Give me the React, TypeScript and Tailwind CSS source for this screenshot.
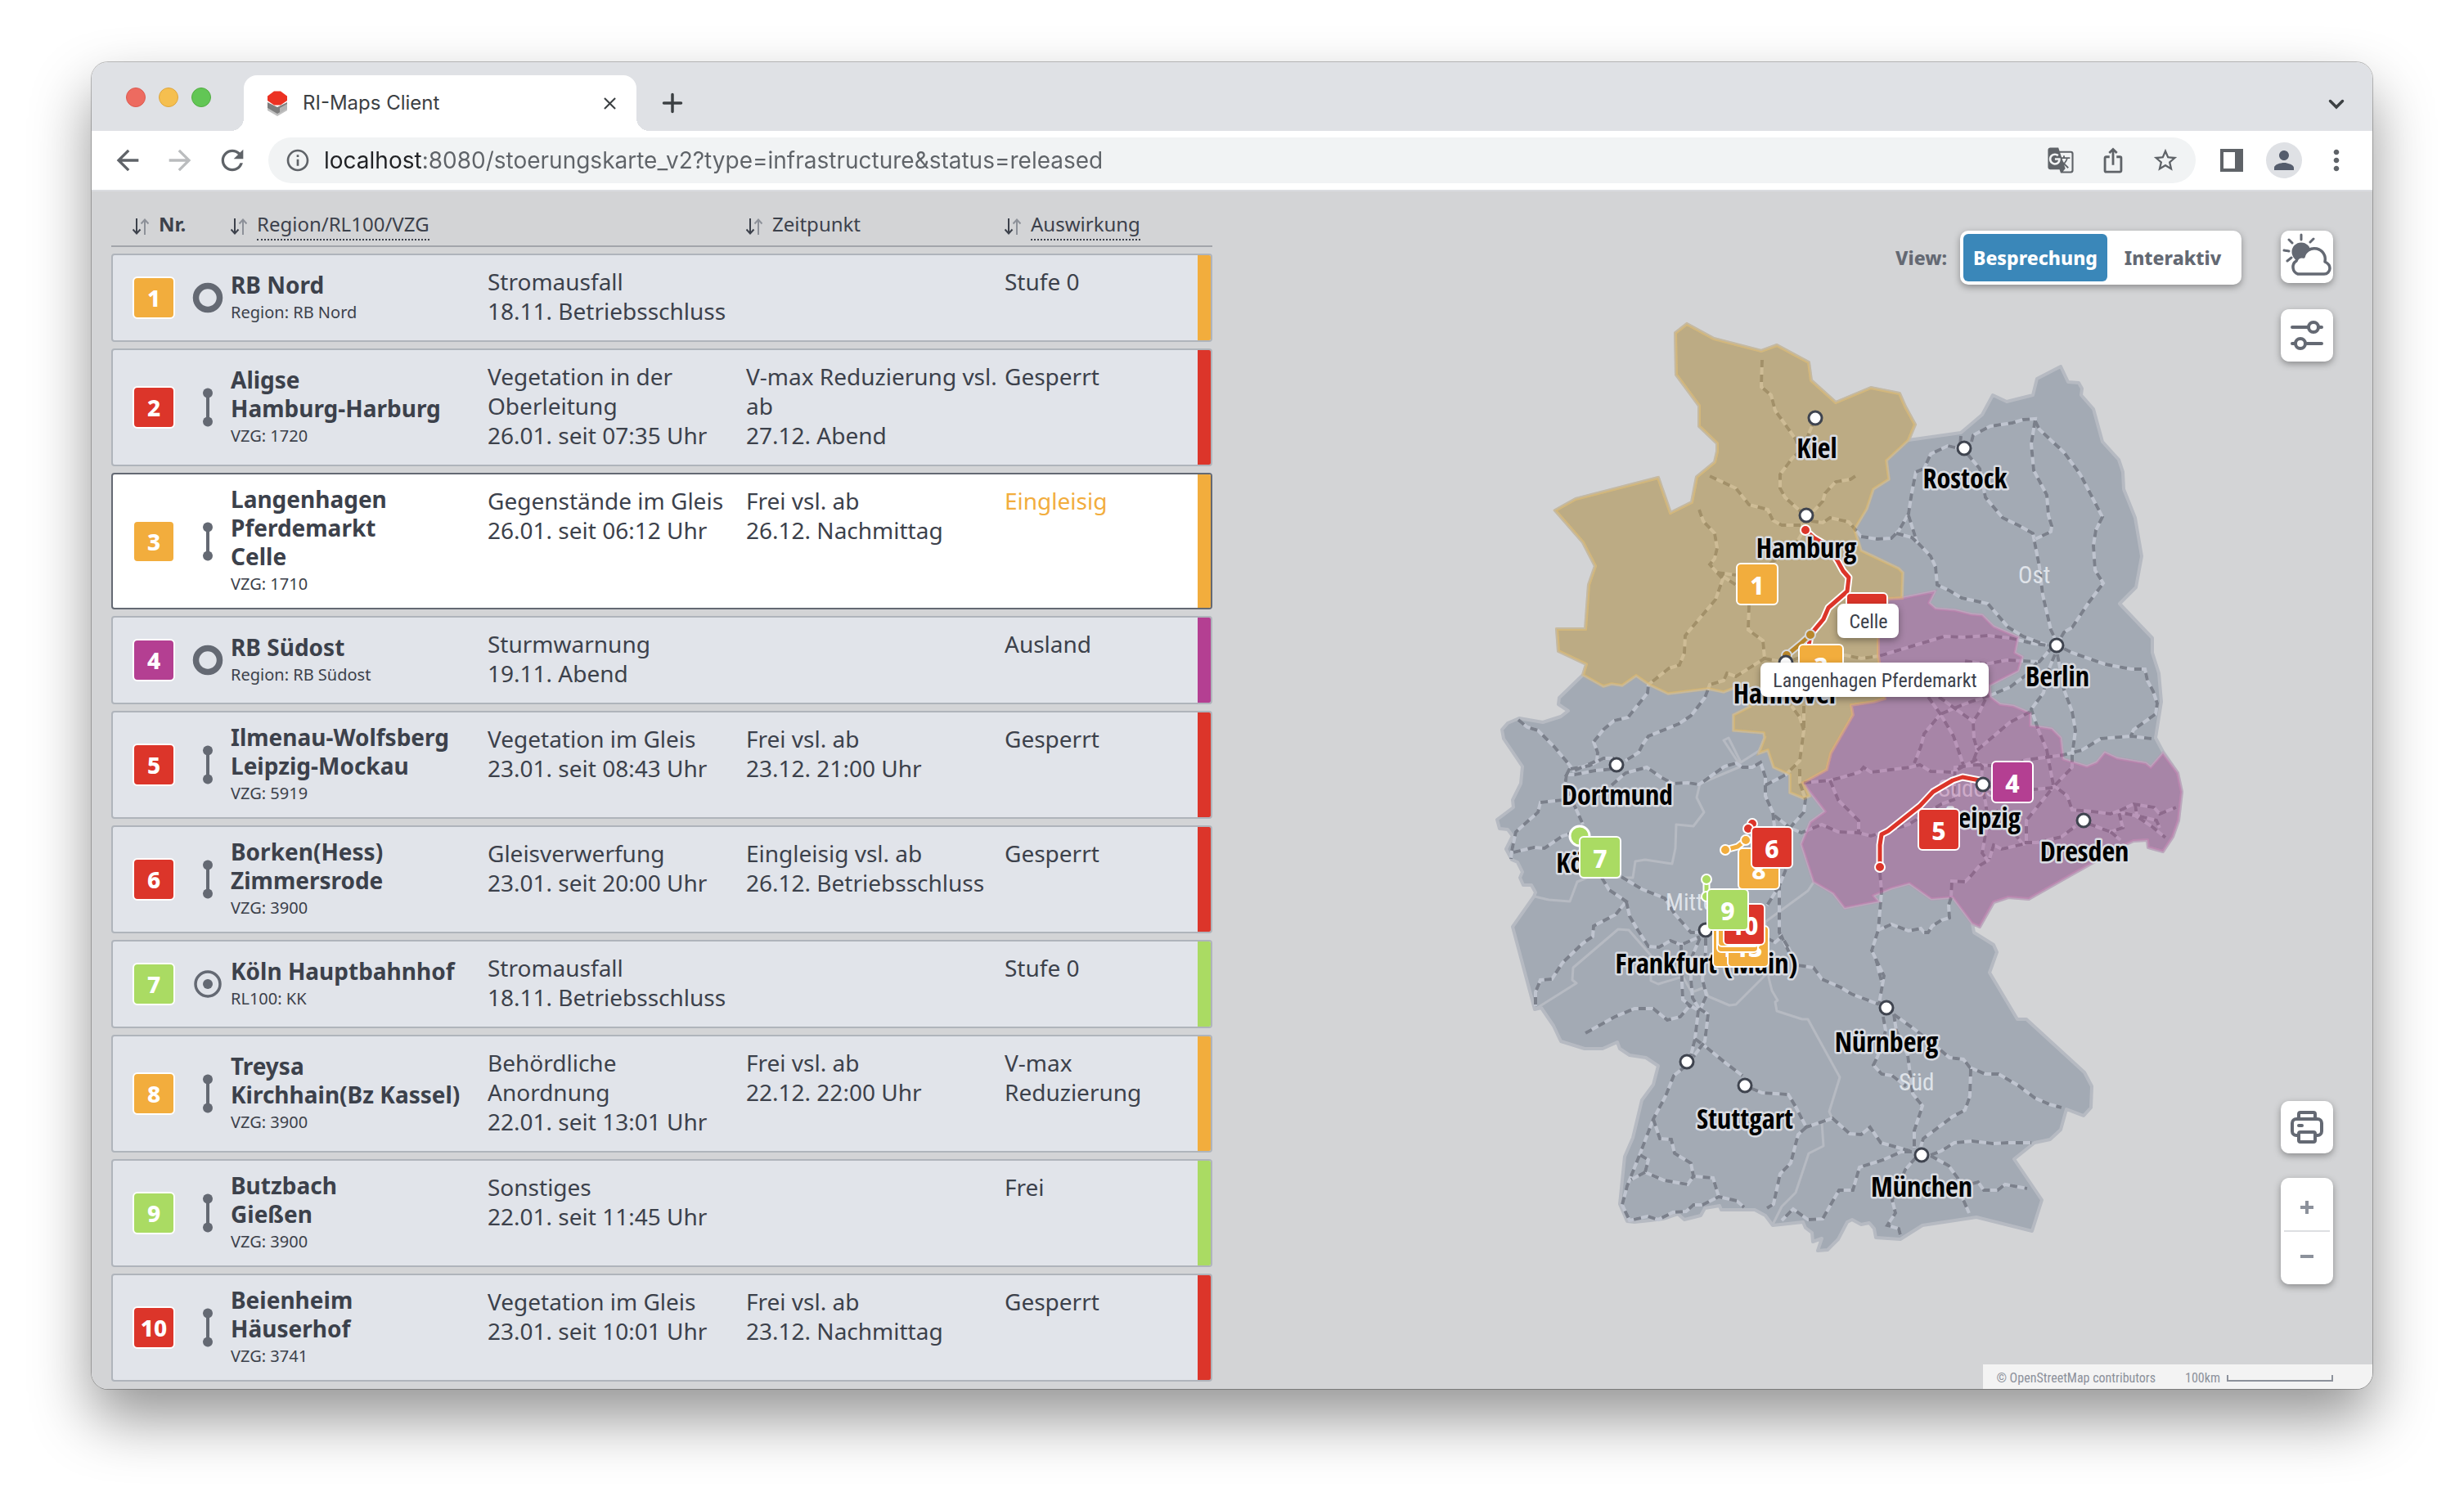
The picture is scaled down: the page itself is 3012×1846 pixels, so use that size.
import React from "react";
import {
  MdArrowBack,
  MdArrowForward,
  MdClose,
  MdGTranslate,
  MdInfoOutline,
  MdIosShare,
  MdMoreVert,
  MdPerson,
  MdRefresh,
  MdStarBorder,
} from "react-icons/md";

type Tone = "orange" | "red" | "purple" | "green";

const TONE_BG: Record<Tone, string> = {
  orange: "bg-[#f2ad3d]",
  red: "bg-[#dc352a]",
  purple: "bg-[#b43f92]",
  green: "bg-[#aadb63]",
};

const TONE_FILL: Record<Tone, string> = {
  orange: "#f2ad3d",
  red: "#dc352a",
  purple: "#b43f92",
  green: "#aadb63",
};

type Kind = "region" | "station" | "track";

interface Incident {
  nr: number;
  tone: Tone;
  kind: Kind;
  names: string[];
  detail: string;
  reason: string[];
  time: string[];
  effect: string[];
  active?: boolean;
}

const INCIDENTS: Incident[] = [
  { nr: 1, tone: "orange", kind: "region", names: ["RB Nord"], detail: "Region: RB Nord", reason: ["Stromausfall", "18.11. Betriebsschluss"], time: [], effect: ["Stufe 0"] },
  { nr: 2, tone: "red", kind: "track", names: ["Aligse", "Hamburg-Harburg"], detail: "VZG: 1720", reason: ["Vegetation in der", "Oberleitung", "26.01. seit 07:35 Uhr"], time: ["V-max Reduzierung vsl.", "ab", "27.12. Abend"], effect: ["Gesperrt"] },
  { nr: 3, tone: "orange", kind: "track", names: ["Langenhagen", "Pferdemarkt", "Celle"], detail: "VZG: 1710", reason: ["Gegenstände im Gleis", "26.01. seit 06:12 Uhr"], time: ["Frei vsl. ab", "26.12. Nachmittag"], effect: ["Eingleisig"], active: true },
  { nr: 4, tone: "purple", kind: "region", names: ["RB Südost"], detail: "Region: RB Südost", reason: ["Sturmwarnung", "19.11. Abend"], time: [], effect: ["Ausland"] },
  { nr: 5, tone: "red", kind: "track", names: ["Ilmenau-Wolfsberg", "Leipzig-Mockau"], detail: "VZG: 5919", reason: ["Vegetation im Gleis", "23.01. seit 08:43 Uhr"], time: ["Frei vsl. ab", "23.12. 21:00 Uhr"], effect: ["Gesperrt"] },
  { nr: 6, tone: "red", kind: "track", names: ["Borken(Hess)", "Zimmersrode"], detail: "VZG: 3900", reason: ["Gleisverwerfung", "23.01. seit 20:00 Uhr"], time: ["Eingleisig vsl. ab", "26.12. Betriebsschluss"], effect: ["Gesperrt"] },
  { nr: 7, tone: "green", kind: "station", names: ["Köln Hauptbahnhof"], detail: "RL100: KK", reason: ["Stromausfall", "18.11. Betriebsschluss"], time: [], effect: ["Stufe 0"] },
  { nr: 8, tone: "orange", kind: "track", names: ["Treysa", "Kirchhain(Bz Kassel)"], detail: "VZG: 3900", reason: ["Behördliche", "Anordnung", "22.01. seit 13:01 Uhr"], time: ["Frei vsl. ab", "22.12. 22:00 Uhr"], effect: ["V-max", "Reduzierung"] },
  { nr: 9, tone: "green", kind: "track", names: ["Butzbach", "Gießen"], detail: "VZG: 3900", reason: ["Sonstiges", "22.01. seit 11:45 Uhr"], time: [], effect: ["Frei"] },
  { nr: 10, tone: "red", kind: "track", names: ["Beienheim", "Häuserhof"], detail: "VZG: 3741", reason: ["Vegetation im Gleis", "23.01. seit 10:01 Uhr"], time: ["Frei vsl. ab", "23.12. Nachmittag"], effect: ["Gesperrt"] },
];

const COLUMNS = "grid grid-cols-[144px_314fr_316fr_316fr_236fr_16px]";

/* ---------- browser chrome ---------- */

function Favicon() {
  return (
    <svg viewBox="0 0 26 32" className="h-8 w-[26px]" aria-hidden="true">
      <path d="M1 22l12 6 12-6v3l-12 7-12-7z" fill="#c0c0c0" />
      <path d="M1 15l12 6 12-6v7l-12 7-12-7z" fill="#7d7d7d" />
      <path d="M16 22l9-5v6l-9 5z" fill="#b4b4b4" />
      <path d="M9 1.500h8l8 6V13l-8 5.500H9L1 13V7.500z" fill="#ec3223" />
    </svg>
  );
}

function TabStrip() {
  return (
    <div className="flex h-[84px] items-end bg-[#dfe1e5] pl-[42px] pr-6">
      <div className="mb-[29px] flex gap-4">
        <button aria-label="Schließen" className="size-6 rounded-full border border-[#dc5a50] bg-[#ed6b60]" />
        <button aria-label="Minimieren" className="size-6 rounded-full border border-[#dfa63c] bg-[#f5bf4f]" />
        <button aria-label="Maximieren" className="size-6 rounded-full border border-[#53ac43] bg-[#62c655]" />
      </div>
      <div className="relative ml-10 flex h-[68px] w-[480px] items-center rounded-t-2xl bg-white pl-7 pr-5">
        <div className="absolute -left-4 bottom-0 size-4 bg-[radial-gradient(circle_at_0_0,transparent_16px,white_16px)]" />
        <div className="absolute -right-4 bottom-0 size-4 bg-[radial-gradient(circle_at_100%_0,transparent_16px,white_16px)]" />
        <Favicon />
        <span className="ml-[18px] flex-1 text-[24px] text-[#3c4043]">RI-Maps Client</span>
        <button aria-label="Tab schließen" className="text-[#3c4043]">
          <MdClose size={25} stroke="currentColor" />
        </button>
      </div>
      <button aria-label="Neuer Tab" className="mb-5 ml-[30px] text-[#3c4043]">
        <svg viewBox="0 0 28 28" className="size-7" stroke="currentColor" strokeWidth="3.5" strokeLinecap="round">
          <path d="M14 3.500v21M3.500 14h21" />
        </svg>
      </button>
      <button aria-label="Tabs durchsuchen" className="mb-[19px] ml-auto flex w-10 justify-center text-[#3c4043]">
        <svg viewBox="0 0 28 28" className="size-7" fill="none" stroke="currentColor" strokeWidth="3.5" strokeLinecap="round">
          <path d="M6.500 10.500l7.500 7.500 7.500-7.500" />
        </svg>
      </button>
    </div>
  );
}

function Toolbar() {
  return (
    <div className="flex h-[74px] items-center gap-6 border-b-2 border-[#dadce0] bg-white px-6 text-[#5f6368]">
      <button aria-label="Zurück"><MdArrowBack size={40} /></button>
      <button aria-label="Vorwärts" className="text-[#babcbe]"><MdArrowForward size={40} /></button>
      <button aria-label="Neu laden"><MdRefresh size={40} /></button>
      <div className="flex h-14 flex-1 items-center rounded-full bg-[#f1f3f4] px-5">
        <button aria-label="Websiteinformationen"><MdInfoOutline size={32} /></button>
        <input
          aria-label="Adresse"
          defaultValue="localhost:8080/stoerungskarte_v2?type=infrastructure&status=released"
          className="ml-4 h-10 min-w-0 flex-1 bg-linear-to-r from-[#202124] from-[121px] to-[#5f6368] to-[121px] bg-clip-text text-[28px] text-transparent outline-none"
        />
        <div className="flex gap-[30px]">
          <button aria-label="Übersetzen"><MdGTranslate size={34} /></button>
          <button aria-label="Teilen"><MdIosShare size={34} /></button>
          <button aria-label="Lesezeichen"><MdStarBorder size={34} /></button>
        </div>
      </div>
      <div className="flex items-center gap-[22px]">
        <button aria-label="Seitenleiste" className="flex size-10 items-center justify-center">
          <svg viewBox="0 0 28 28" className="size-7">
            <path fillRule="evenodd" d="M0 0h28v28H0zM4 4v20h14V4z" fill="currentColor" />
          </svg>
        </button>
        <button aria-label="Profil" className="flex size-11 items-center justify-center rounded-full bg-[#dfe1e5] text-[#555d6d]">
          <MdPerson size={36} />
        </button>
        <button aria-label="Menü"><MdMoreVert size={40} /></button>
      </div>
    </div>
  );
}

/* ---------- incident table ---------- */

function SortIcon() {
  return (
    <svg viewBox="0 0 20 20" className="size-5" fill="none" strokeWidth="2">
      <path d="M5 0v19M0.500 13.500l4.500 5 4.500-5" stroke="#3c414b" />
      <path d="M15 20V1M10.500 6.500l4.500-5 4.500 5" stroke="#8d9199" />
    </svg>
  );
}

function HeaderCell({ label, dotted, bold, className }: { label: string; dotted?: boolean; bold?: boolean; className?: string }) {
  return (
    <th scope="col" className={`text-left ${className ?? ""}`}>
      <button className="flex items-center gap-3">
        <SortIcon />
        <span
          className={`border-b-2 pb-1 text-[24px] leading-7 text-[#3c414b] ${dotted ? "border-dotted border-[#3c414b]" : "border-transparent"} ${bold ? "font-bold" : "font-normal"}`}
        >
          {label}
        </span>
      </button>
    </th>
  );
}

function KindIcon({ kind }: { kind: Kind }) {
  return (
    <svg viewBox="0 0 40 48" className="h-12 w-10" fill="none" stroke="#646973" aria-hidden="true">
      {kind === "region" && <circle cx="20" cy="24" r="14.500" strokeWidth="7.500" />}
      {kind === "station" && (
        <>
          <circle cx="20" cy="24" r="15" strokeWidth="3.500" />
          <circle cx="20" cy="24" r="6" fill="#646973" stroke="none" />
        </>
      )}
      {kind === "track" && (
        <>
          <path d="M20 7v34" strokeWidth="4" />
          <circle cx="20" cy="6.500" r="6" fill="#646973" stroke="none" />
          <circle cx="20" cy="41.500" r="6" fill="#646973" stroke="none" />
        </>
      )}
    </svg>
  );
}

function Lines({ lines }: { lines: string[] }) {
  return (
    <>
      {lines.map((line) => (
        <div key={line}>{line}</div>
      ))}
    </>
  );
}

function IncidentRow({ item }: { item: Incident }) {
  return (
    <tr
      className={`${COLUMNS} shrink-0 overflow-hidden whitespace-nowrap rounded border-2 text-[28px] leading-9 text-[#3c414b] ${item.active ? "border-[#646973] bg-white" : "border-[#afb4bb] bg-[#e1e4ea]"}`}
    >
      <td className="flex items-center gap-5 pl-6">
        <span className={`flex size-13 items-center justify-center rounded-md border-2 border-white text-[28px] font-extrabold text-white ${TONE_BG[item.tone]}`}>
          {item.nr}
        </span>
        <KindIcon kind={item.kind} />
      </td>
      <th scope="row" className="self-center pb-4 pt-[13px] text-left font-bold leading-[35px]">
        <Lines lines={item.names} />
        <div className="mt-[3px] text-[20px] font-normal leading-[26px]">{item.detail}</div>
      </th>
      <td className="pb-[18px] pt-[14px]"><Lines lines={item.reason} /></td>
      <td className="pb-[18px] pt-[14px]"><Lines lines={item.time} /></td>
      <td className={`pb-[18px] pt-[14px] ${item.active ? "text-[#f2ad3d]" : ""}`}><Lines lines={item.effect} /></td>
      <td className={TONE_BG[item.tone]} />
    </tr>
  );
}

function IncidentTable() {
  return (
    <section className="overflow-hidden px-6 font-['Noto_Sans',sans-serif]">
      <table className="flex flex-col gap-2">
        <thead className="block">
          <tr className={`${COLUMNS} h-[68px] items-end border-b-2 border-[#a2a5ab] px-[2px] pb-[6px]`}>
            <HeaderCell label="Nr." bold className="pl-6" />
            <HeaderCell label="Region/RL100/VZG" dotted className="col-span-2" />
            <HeaderCell label="Zeitpunkt" />
            <HeaderCell label="Auswirkung" dotted />
          </tr>
        </thead>
        <tbody className="flex flex-col gap-2">
          {INCIDENTS.map((item) => (
            <IncidentRow key={item.nr} item={item} />
          ))}
        </tbody>
      </table>
    </section>
  );
}

/* ---------- map ---------- */

const GERMANY =
  "2062,396 2095,414 2153,429 2172,422 2211,443 2214,465 2244,492 2287,474 2322,481 2329,497 2341,519 2333,538 2397,529 2423,507 2436,483 2453,491 2485,483 2490,463 2519,448 2528,467 2541,468 2545,475 2544,483 2559,500 2570,540 2590,562 2595,577 2596,598 2610,633 2618,680 2611,718 2591,738 2631,780 2631,798 2639,823 2642,858 2635,902 2644,919 2662,945 2667,968 2663,1003 2656,1023 2644,1041 2626,1036 2625,1027 2608,1028 2597,1033 2554,1057 2480,1099 2455,1097 2437,1103 2420,1133 2411,1129 2413,1140 2437,1155 2441,1164 2432,1189 2466,1246 2477,1246 2548,1311 2557,1328 2556,1354 2547,1364 2526,1356 2519,1381 2506,1393 2487,1397 2462,1417 2496,1467 2484,1505 2416,1488 2350,1498 2323,1515 2293,1513 2291,1502 2285,1495 2275,1497 2264,1491 2258,1494 2247,1515 2234,1528 2222,1529 2227,1514 2216,1518 2215,1507 2207,1501 2204,1494 2167,1498 2158,1486 2145,1479 2104,1479 2102,1474 2084,1477 2079,1486 2059,1491 2051,1484 2033,1490 2017,1492 1998,1494 1989,1493 1980,1472 1986,1414 1996,1391 2007,1345 2021,1326 2027,1303 2012,1293 1992,1290 1980,1282 1977,1274 1959,1282 1937,1282 1908,1273 1899,1254 1884,1232 1876,1234 1849,1133 1875,1096 1877,1091 1872,1082 1862,1082 1858,1073 1861,1066 1855,1054 1848,1051 1841,1038 1849,1022 1843,1014 1833,1013 1830,1002 1850,987 1849,978 1859,958 1861,937 1838,903 1836,892 1843,884 1857,878 1886,883 1908,876 1917,869 1905,861 1906,853 1935,825 1939,812 1905,796 1903,769 1938,769 1942,715 1950,692 1935,663 1901,624 1926,610 2027,584 2042,627 2068,614 2074,583 2096,565 2099,552 2099,542 2077,521 2077,496 2049,458 2048,407";

const NORD =
  "2062,396 2095,414 2153,429 2172,422 2211,443 2214,465 2244,492 2287,474 2322,481 2329,497 2341,519 2333,538 2306,563 2309,586 2290,598 2282,622 2267,647 2275,673 2321,695 2326,700 2325,731 2308,732 2296,780 2296,802 2304,854 2290,858 2263,862 2265,874 2238,921 2233,941 2204,957 2212,973 2205,976 2188,969 2188,947 2168,938 2161,917 2150,921 2157,902 2156,896 2119,893 2119,874 2139,864 2120,841 2107,846 2088,842 2039,848 2016,837 2000,826 1983,838 1970,836 1960,839 1935,825 1939,812 1905,796 1903,769 1938,769 1942,715 1950,692 1935,663 1901,624 1926,610 2027,584 2042,627 2068,614 2074,583 2096,565 2099,552 2099,542 2077,521 2077,496 2049,458 2048,407";

const SUEDOST =
  "2325,731 2365,723 2358,737 2366,744 2390,746 2410,751 2423,752 2437,766 2467,779 2463,798 2472,803 2467,820 2432,838 2433,852 2445,861 2461,863 2482,872 2482,887 2508,891 2519,902 2522,928 2551,937 2563,932 2573,920 2588,927 2623,933 2629,938 2644,921 2662,945 2667,968 2663,1003 2656,1023 2644,1041 2626,1036 2625,1027 2608,1028 2597,1033 2554,1057 2480,1099 2455,1097 2437,1103 2420,1133 2411,1129 2387,1097 2361,1099 2334,1080 2312,1086 2290,1095 2296,1102 2255,1110 2241,1092 2217,1078 2202,1032 2213,1005 2231,992 2204,957 2233,941 2238,921 2265,874 2263,862 2290,858 2304,854 2296,802 2296,780 2308,732";

const INNER_BORDERS = [
  "2158,900 2150,918 2128,932 2113,902 2107,905 2128,937 2078,958 2074,975 2083,993 2070,1010 2049,1008 2048,1037 2044,1056 2011,1051 1999,1053 1996,1073 1940,1073 1928,1078 1919,1102 1893,1100 1876,1096",
  "2204,957 2231,992 2213,1005 2202,1032",
  "2218,1077 2210,1089 2158,1127 2162,1195 2166,1211 2173,1223 2170,1225 2172,1236 2203,1246 2210,1246 2222,1268 2249,1317 2236,1359 2240,1368 2227,1372 2229,1401 2211,1410 2195,1458 2178,1475 2167,1497",
  "2158,1192 2122,1228 2114,1229 2088,1218 2084,1207 2068,1213 2057,1194 2027,1203 2018,1199 2018,1168 1991,1137 1978,1136 1923,1183 1922,1198 1927,1202 1876,1234",
];

const RAILS = [
  "2154,440 2153,473 2165,483 2170,502 2178,513 2195,537 2200,552 2191,560 2176,580 2176,597 2182,608 2203,627",
  "2218,513 2210,533 2200,552",
  "2268,582 2262,586 2244,589 2231,603 2228,613 2214,628",
  "2090,582 2122,597 2138,617 2161,623 2167,636 2178,642 2203,642",
  "2077,623 2082,637 2096,652 2099,670 2096,683 2090,690 2099,700 2122,703",
  "2207,645 2195,665 2163,690 2138,712",
  "2099,700 2122,715",
  "2099,700 2106,708 2097,733 2060,777 2059,798 2053,813 2040,817 2015,837 2014,847 1990,877 1973,881 1960,892 1948,907 1953,920 1952,930 1922,943",
  "2138,740 2137,770 2155,783 2157,805 2122,827 2111,823 2107,832 2090,837 2084,853 2067,875 2052,885 2015,900 2008,910 2003,920 1987,930",
  "2157,805 2183,810 2210,800 2256,801 2275,805 2297,802 2337,790 2377,778 2400,779 2430,777 2457,780 2487,787 2503,789",
  "2214,637 2228,639 2237,633 2260,638 2275,656 2295,659 2312,658 2321,649 2333,628 2337,602 2342,577 2352,573 2360,555 2381,545 2394,548",
  "2333,630 2343,662 2360,680 2366,693 2368,715 2383,722 2398,731 2430,738 2455,767 2473,778 2503,789",
  "2318,652 2337,657 2342,662",
  "2397,533 2396,545",
  "2410,540 2412,532 2433,521 2460,517 2473,513 2488,512 2483,543 2486,575 2502,605 2504,630 2508,643 2507,650 2488,659",
  "2488,515 2493,525 2523,553 2543,580 2570,632 2562,648 2559,667 2561,697 2571,713 2553,737 2533,767 2523,773 2516,785",
  "2405,555 2420,573 2427,608 2448,633 2467,642 2485,652 2493,693 2497,727 2507,770 2513,783",
  "2402,808 2427,812 2453,807 2473,808 2493,809 2507,793",
  "2490,810 2477,825 2457,840 2433,850 2403,860 2372,873 2352,897 2348,913 2340,933",
  "2357,852 2372,873 2388,900 2400,935",
  "2370,852 2412,882 2413,903 2417,917 2413,928 2423,937 2422,960 2427,980 2430,1003 2423,1043 2430,1052 2420,1058 2410,1070 2402,1078 2386,1077 2385,1097 2382,1107 2383,1122 2373,1125 2362,1132 2357,1140 2352,1140 2348,1135 2333,1138 2312,1130 2296,1137",
  "2427,855 2420,870 2412,882",
  "2482,870 2457,883 2417,917",
  "2512,800 2505,817 2498,847 2483,867 2492,893 2502,917 2510,960 2527,973 2533,990 2557,992 2580,995 2593,990 2608,983 2633,987 2640,995 2660,987",
  "2515,800 2523,843 2533,870 2537,893 2533,923 2533,938 2510,962 2477,1003 2477,1030 2490,1030 2520,1023 2537,1010",
  "2523,793 2533,798 2573,812 2605,818 2622,818 2625,832 2632,845 2637,860 2635,873 2608,892 2605,900",
  "2630,903 2605,900 2568,903 2545,917 2522,923 2477,929 2453,937 2417,935 2390,938 2388,977",
  "2205,957 2237,954 2253,950 2273,944 2278,938 2287,944 2335,938 2347,935 2360,943 2387,944 2400,937 2417,928",
  "2430,960 2467,957 2487,965 2510,963",
  "2440,990 2463,1020 2473,1032 2447,1038 2437,1033 2432,1050",
  "2237,954 2247,978 2272,1003 2272,1018",
  "2169,997 2188,1012 2202,1018 2227,1008 2247,1017 2272,1018 2287,1022 2333,1008 2373,983 2390,977",
  "2553,1007 2580,1017 2595,1012 2590,993 2610,997 2630,1010 2647,1024",
  "2610,983 2612,997 2636,1003 2640,1012",
  "2580,1017 2592,1027",
  "2298,1067 2300,1090 2296,1137 2288,1162 2303,1193 2297,1227",
  "2293,1172 2300,1200",
  "2183,1063 2175,1083 2175,1140 2187,1160 2197,1180 2217,1183 2227,1197 2250,1207 2263,1215 2297,1228",
  "2175,1083 2160,1107",
  "2160,1147 2170,1152 2178,1145 2192,1175",
  "2302,1243 2305,1260 2295,1292 2290,1302 2300,1313 2313,1315 2330,1328",
  "2315,1240 2318,1260 2332,1290 2338,1337 2350,1352 2340,1382 2340,1403",
  "2315,1240 2340,1258 2370,1282 2383,1293 2400,1295 2408,1305 2427,1313 2443,1313 2467,1327 2487,1342 2505,1350 2520,1354",
  "2409,1307 2408,1340 2402,1357 2387,1365 2351,1392 2348,1402",
  "2335,1407 2317,1402 2299,1397 2286,1378 2275,1387 2261,1386 2240,1367 2208,1378 2195,1353 2186,1338 2154,1336 2132,1327",
  "2208,1378 2198,1387 2189,1422 2176,1435 2168,1472 2160,1477",
  "2337,1408 2324,1408 2302,1418 2273,1427 2265,1455 2248,1455 2228,1490 2210,1491 2192,1478 2178,1492",
  "2342,1415 2329,1430 2313,1467 2317,1483 2307,1498 2321,1502 2323,1510",
  "2360,1413 2382,1425 2393,1440 2400,1467 2407,1483",
  "2411,1447 2418,1445 2425,1455 2442,1455 2451,1448 2478,1453",
  "2360,1412 2373,1407 2389,1397 2411,1395 2436,1398 2454,1397 2483,1397",
  "2061,1303 2046,1315 2036,1340 2021,1368 2005,1410 1989,1450 1983,1473 1992,1492 2014,1487 2027,1491 2045,1482 2061,1481 2070,1473 2081,1473 2101,1463 2123,1468 2132,1476",
  "2021,1368 2029,1392 2043,1393 2047,1410 2067,1422 2070,1438 2094,1440 2101,1463",
  "2005,1412 2015,1418 2011,1433 2034,1443 2063,1448 2070,1438",
  "2011,1433 1994,1442",
  "1938,1263 1974,1243 1998,1233 2021,1233 2038,1247 2054,1243 2065,1230",
  "2055,1155 2056,1200 2057,1222 2067,1230 2076,1235 2072,1270 2067,1290",
  "2078,1147 2068,1170 2067,1197 2069,1220 2077,1233 2088,1240",
  "2085,1147 2085,1163 2081,1197 2086,1217 2078,1235",
  "2088,1240 2084,1273 2070,1292",
  "2072,1270 2083,1278 2110,1300 2130,1315",
  "1958,1073 1967,1088 1988,1102 1975,1118 1948,1132 1947,1145 1935,1153 1910,1177 1897,1197 1883,1198 1877,1213 1877,1230",
  "1988,1102 1992,1120 2002,1137 2015,1157 2028,1158 2042,1150 2055,1155 2078,1145",
  "1982,1072 2007,1087 2035,1098 2047,1117 2067,1140 2078,1140",
  "1856,880 1867,889 1880,893 1900,913 1920,937 1915,947 1925,947 1950,942 1973,940",
  "1920,940 1943,936 1960,927 1973,927",
  "1915,947 1913,960 1927,990 1935,1008",
  "1910,978 1883,981 1880,993 1853,1017 1848,1040 1847,1050",
  "1850,1042 1875,1036 1888,1037 1910,1022 1927,1017",
  "1970,960 1987,945 2013,938 2030,950 2045,958 2063,957 2077,959 2108,937 2122,933 2130,938 2142,938 2152,932 2158,950 2158,973 2167,993 2169,1010",
  "2158,960 2183,947 2200,930 2205,893 2200,877 2190,863",
  "2205,863 2205,893",
  "2200,940 2200,957 2207,977 2205,993 2188,1012",
];

const CITIES = [
  { name: "Kiel", x: 2219, y: 511, lx: 2221, ly: 560 },
  { name: "Rostock", x: 2401, y: 548, lx: 2402, ly: 597 },
  { name: "Hamburg", x: 2208, y: 630, lx: 2208, ly: 682 },
  { name: "Berlin", x: 2514, y: 789, lx: 2515, ly: 839 },
  { name: "Hannover", x: 2183, y: 810, lx: 2183, ly: 860 },
  { name: "Dortmund", x: 1976, y: 935, lx: 1977, ly: 984 },
  { name: "Köln", x: 1931, y: 1022, lx: 1932, ly: 1067 },
  { name: "Leipzig", x: 2424, y: 959, lx: 2425, ly: 1012 },
  { name: "Dresden", x: 2547, y: 1003, lx: 2548, ly: 1053 },
  { name: "Frankfurt (Main)", x: 2085, y: 1137, lx: 2086, ly: 1190 },
  { name: "Nürnberg", x: 2306, y: 1232, lx: 2306, ly: 1286 },
  { name: "", x: 2062, y: 1298, lx: 0, ly: 0 },
  { name: "Stuttgart", x: 2133, y: 1327, lx: 2133, ly: 1380 },
  { name: "München", x: 2349, y: 1412, lx: 2349, ly: 1463 },
];

const NARROW = "font-['Roboto_Condensed',Roboto,sans-serif]";
const NARROW_BOLD = "font-['Open_Sans_Condensed','Roboto_Condensed',Roboto,sans-serif] font-bold";

function TrackLine({ points, color, casing = "#fff", ends }: { points: string; color: string; casing?: string; ends: [number, number][] }) {
  return (
    <g fill="none" strokeLinejoin="round" strokeLinecap="round">
      <polyline points={points} stroke={casing} strokeWidth="9" />
      <polyline points={points} stroke={color} strokeWidth="5" />
      {ends.map(([x, y]) => (
        <circle key={`${x}-${y}`} cx={x} cy={y} r="6" fill={color} stroke={casing} strokeWidth="2" />
      ))}
    </g>
  );
}

function Marker({ x, y, label, tone, size = 50 }: { x: number; y: number; label?: string; tone: Tone; size?: number }) {
  return (
    <g>
      <rect x={x + 1} y={y + 1} width={size} height={size} rx="5" fill={TONE_FILL[tone]} stroke="#fff" strokeWidth="2" />
      {label && (
        <text x={x + size / 2 + 1} y={y + 39} textAnchor="middle" className="fill-white font-['Noto_Sans',sans-serif] text-[30px] font-extrabold">
          {label}
        </text>
      )}
    </g>
  );
}

function GermanyMap() {
  return (
    <svg viewBox="1506 234 1394 1464" preserveAspectRatio="xMidYMid slice" className="absolute inset-0 size-full" role="img" aria-label="Karte der Störungen in Deutschland">
      <polygon points={GERMANY} fill="#a3aab4" stroke="#b6bac2" strokeWidth="4" strokeLinejoin="round" />
      <g fill="none" stroke="#b6bac2" strokeWidth="3" strokeLinejoin="round">
        {INNER_BORDERS.map((p) => (
          <polyline key={p} points={p} />
        ))}
        <polygon points={SUEDOST} />
        <polygon points={NORD} />
      </g>
      <g fill="none" stroke="#bfc4cf" strokeWidth="4">
        {RAILS.map((p) => (
          <polyline key={p} points={p} />
        ))}
      </g>
      <g fill="none" stroke="#7b808b" strokeWidth="4" strokeDasharray="9 9">
        {RAILS.map((p) => (
          <polyline key={p} points={p} />
        ))}
      </g>
      <g className={`${NARROW} fill-[#dfe3e9] text-[29px]`}>
        <text x="2467" y="713">Ost</text>
        <text x="2036" y="1113">Mitte</text>
        <text x="2369" y="974">Südost</text>
        <text x="2321" y="1333">Süd</text>
      </g>
      <polygon points={SUEDOST} fill="#ae438f" fillOpacity="0.35" stroke="#d070b0" strokeOpacity="0.25" strokeWidth="4" />
      <polygon points={NORD} fill="#eab02b" fillOpacity="0.35" stroke="#eab955" strokeOpacity="0.3" strokeWidth="4" />

      <TrackLine
        points="2207,648 2218,658 2235,668 2247,687 2253,698 2260,706 2258,723 2235,743 2229,757 2213,776 2211,790"
        color={TONE_FILL.red}
        ends={[[2207, 648]]}
      />
      <TrackLine points="2213,776 2201,787 2184,801" color="#b8862b" casing="#d8dade" ends={[[2213, 776], [2184, 801]]} />
      <TrackLine
        points="2298,1060 2298,1033 2300,1020 2308,1016 2347,985 2363,968 2387,954 2399,950 2420,954"
        color={TONE_FILL.red}
        ends={[[2298, 1060]]}
      />

      <g fill="#fff" stroke="#3f444f" strokeWidth="3">
        {CITIES.map((c) => (
          <circle key={`${c.x}`} cx={c.x} cy={c.y} r="8" />
        ))}
      </g>
      <g className={`${NARROW_BOLD} fill-black stroke-[#d9dce2] text-[34px]`} strokeWidth="5" strokeLinejoin="round" textAnchor="middle" paintOrder="stroke">
        {CITIES.filter((c) => c.name).map((c) => (
          <text key={c.name} x={c.lx} y={c.ly}>{c.name}</text>
        ))}
      </g>

      <circle cx="1931" cy="1022" r="12" fill={TONE_FILL.green} stroke="#fff" strokeWidth="3" />
      <TrackLine points="2109,1039 2124,1035 2134,1027" color={TONE_FILL.orange} ends={[[2109, 1039], [2134, 1027]]} />
      <TrackLine points="2142,1007 2137,1013" color={TONE_FILL.red} ends={[[2142, 1007], [2137, 1013]]} />
      <TrackLine points="2086,1075 2086,1096" color={TONE_FILL.green} ends={[[2086, 1075], [2086, 1096]]} />

      <Marker x={2122} y={688} label="1" tone="orange" />
      <Marker x={2256} y={724} tone="red" />
      <Marker x={2198} y={787} label="3" tone="orange" size={54} />
      <Marker x={2434} y={930} label="4" tone="purple" />
      <Marker x={2344} y={988} label="5" tone="red" />
      <Marker x={2124} y={1036} label="8" tone="orange" />
      <Marker x={2140} y={1010} label="6" tone="red" />
      <Marker x={1930} y={1022} label="7" tone="green" />
      <Marker x={2093} y={1131} label="14" tone="orange" />
      <Marker x={2111} y={1131} label="13" tone="orange" />
      <Marker x={2098} y={1113} tone="orange" />
      <Marker x={2099} y={1106} tone="orange" />
      <Marker x={2106} y={1104} label="10" tone="red" />
      <Marker x={2086} y={1086} label="9" tone="green" />

      <g className="drop-shadow-[0_3px_4px_rgba(0,0,0,0.35)]" fill="#fff">
        <rect x="2246" y="738" width="75" height="42" rx="8" />
        <rect x="2152" y="810" width="279" height="42" rx="8" />
      </g>
      <g className={`${NARROW} fill-[#3c414b] text-[24px]`} textAnchor="middle">
        <text x="2284" y="768">Celle</text>
        <text x="2292" y="840">Langenhagen Pferdemarkt</text>
      </g>
    </svg>
  );
}

const CARD = "rounded-[10px] bg-white text-[#646973] shadow-[0_3px_8px_rgba(0,0,0,0.35)]";

function MapPanel() {
  return (
    <section className="relative flex flex-col font-['Noto_Sans',sans-serif]">
      <GermanyMap />
      <div className="relative flex items-start justify-end pr-12 pt-12">
        <div className="flex items-center gap-4 text-[23px] font-extrabold text-[#646973]">
          <span id="view-label">View:</span>
          <div role="group" aria-labelledby="view-label" className={`flex h-[66px] p-1 ${CARD}`}>
            <button aria-pressed="true" className="w-44 rounded-md bg-[#3a87b9] text-white">Besprechung</button>
            <button aria-pressed="false" className="w-40">Interaktiv</button>
          </div>
        </div>
        <div className="ml-12 flex flex-col gap-8">
          <button aria-label="Wetter" className={`size-16 ${CARD}`}>
            <svg viewBox="0 0 64 64" className="size-16" fill="none" stroke="currentColor" strokeLinecap="round" strokeLinejoin="round">
              <circle cx="25" cy="26" r="11.500" fill="currentColor" stroke="none" />
              <path d="M25 5v6M10 11l4 4M40 10l-4 4M4 24l6 1M8 37l5-4" strokeWidth="3" />
              <path d="M21 53a9 9 0 0 1-2-16 7 7 0 0 1 9-5 12 12 0 0 1 26 6c4 2 6 5 6 8a7 7 0 0 1-7 7z" fill="#fff" strokeWidth="3.500" />
            </svg>
          </button>
          <button aria-label="Filter" className={`size-16 ${CARD}`}>
            <svg viewBox="0 0 64 64" className="size-16" fill="none" stroke="currentColor" strokeWidth="4" strokeLinecap="round">
              <path d="M14 22h19M46 22h4M14 42h4M32 42h18" />
              <circle cx="40" cy="22" r="6" />
              <circle cx="24" cy="42" r="6" />
            </svg>
          </button>
        </div>
      </div>
      <div className="relative mt-auto flex flex-col items-end gap-[30px] pr-12">
        <button aria-label="Drucken" className={`size-16 ${CARD}`}>
          <svg viewBox="0 0 64 64" className="size-16" fill="none" stroke="currentColor" strokeWidth="4" strokeLinejoin="round">
            <path d="M22 22v-6a2 2 0 0 1 2-2h16a2 2 0 0 1 2 2v6" />
            <path d="M22 42h-3a5 5 0 0 1-5-5V27a5 5 0 0 1 5-5h26a5 5 0 0 1 5 5v10a5 5 0 0 1-5 5h-3" />
            <rect x="22" y="38" width="20" height="12" rx="2" />
            <path d="M22 30h4" strokeLinecap="round" />
          </svg>
        </button>
        <div className={`flex w-16 flex-col px-1 ${CARD}`}>
          <button aria-label="Vergrößern" className="flex h-[66px] items-center justify-center border-b-2 border-[#dddfe2] pt-2">
            <svg viewBox="0 0 16 16" className="size-4" stroke="#8c919b" strokeWidth="4"><path d="M8 0v16M0 8h16" /></svg>
          </button>
          <button aria-label="Verkleinern" className="flex h-16 items-center justify-center pb-1">
            <svg viewBox="0 0 16 16" className="size-4" stroke="#8c919b" strokeWidth="4"><path d="M0 8h16" /></svg>
          </button>
        </div>
      </div>
      <footer className={`relative mt-[98px] flex h-[30px] items-center self-end bg-[#f3f3f3] pl-4 pr-12 pt-1 text-[16px] leading-6 text-[#8c919b] ${NARROW}`}>
        <a href="#osm">© OpenStreetMap contributors</a>
        <span className="ml-9">100km</span>
        <span className="ml-2 h-2 w-[130px] border-2 border-t-0 border-[#8c919b]" />
      </footer>
    </section>
  );
}

export default function App() {
  return (
    <main className="min-h-screen bg-white px-28 pb-[148px] pt-[76px] font-[Inter,sans-serif]">
      <div className="flex h-[calc(100vh-224px)] flex-col overflow-hidden rounded-[20px] shadow-[0_0_0_1px_rgba(0,0,0,0.25),0_36px_72px_rgba(0,0,0,0.42)]">
        <TabStrip />
        <Toolbar />
        <div className="grid min-h-0 flex-1 grid-cols-2 bg-[#d3d4d6]">
          <IncidentTable />
          <MapPanel />
        </div>
      </div>
    </main>
  );
}
